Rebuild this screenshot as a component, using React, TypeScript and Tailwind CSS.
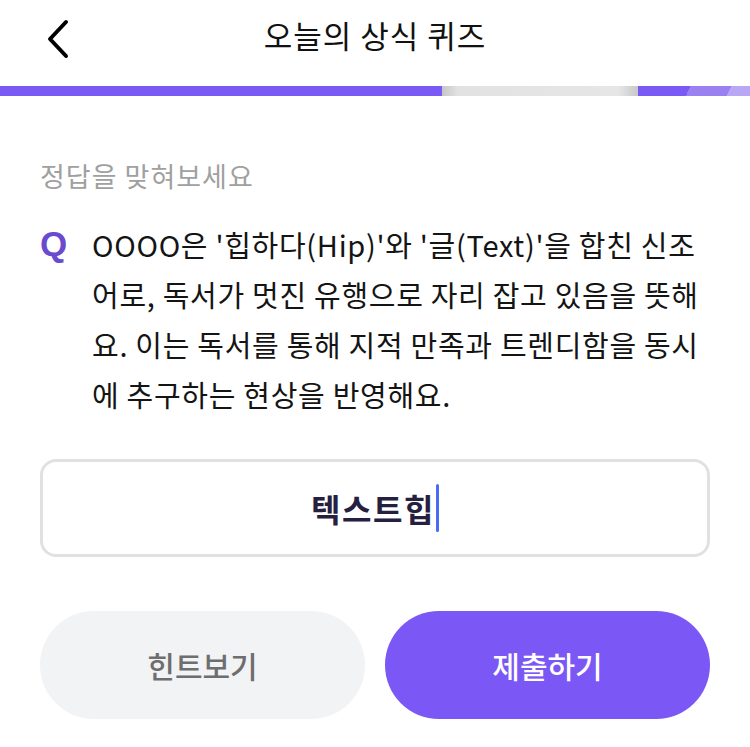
const font = { fontFamily: '"Noto Sans CJK KR", "Noto Sans", sans-serif' };

const lines = [
  "OOOO은 '힙하다(Hip)'와 '글(Text)'을 합친 신조",
  "어로, 독서가 멋진 유행으로 자리 잡고 있음을 뜻해",
  "요. 이는 독서를 통해 지적 만족과 트렌디함을 동시",
  "에 추구하는 현상을 반영해요.",
];

function Header() {
  return (
    <div className="relative flex items-center justify-center h-[86px]">
      <button className="absolute left-[40px] top-[14px] p-1">
        <svg width="32" height="44" viewBox="0 0 32 44" fill="none">
          <path d="M22 4 L6 21 L22 38" stroke="#000" strokeWidth="4" strokeLinecap="round" strokeLinejoin="round" />
        </svg>
      </button>
      <h1 className="text-[31px] text-[#111] -mt-[16px] tracking-[1px]">오늘의 상식 퀴즈</h1>
    </div>
  );
}

function ProgressBar() {
  return (
    <div className="flex h-[10px] w-full">
      <div className="w-[442px] bg-[#7b59f5]" />
      <div className="w-[196px] bg-[linear-gradient(90deg,#c6c6c6,#e2e2e2_8%,#e6e6e6_90%,#c8c8c8)]" />
      <div className="flex-1 bg-[linear-gradient(115deg,#7b59f5_45%,#9a80f0_45%,#9a80f0_80%,#b9a7f6_80%)]" />
    </div>
  );
}

export default function App() {
  return (
    <div className="w-[750px] h-[747px] bg-white overflow-hidden" style={font}>
      <Header />
      <ProgressBar />
      <div className="px-10">
        <p className="mt-[62px] text-[27px] leading-[36px] text-[#a0a0a0] tracking-[1px]">정답을 맞혀보세요</p>
        <div className="mt-[25px] flex">
          <span
            className="w-[52px] text-[35px] leading-[50px] font-bold text-[#6a4bd0]"
            style={{ fontFamily: '"Liberation Sans", Arial, sans-serif' }}
          >
            Q
          </span>
          <div className="text-[29px] leading-[50px] text-[#141414] tracking-[0.7px]">
            {lines.map((line) => (
              <span key={line} className="block whitespace-nowrap">{line}</span>
            ))}
          </div>
        </div>
        <div className="mt-[40px] h-[98px] border-[3px] border-[#e0e1e3] rounded-[16px] flex items-center justify-center">
          <span className="text-[32px] font-bold text-[#262040] tracking-[1.5px]">텍스트힙</span>
          <span className="ml-[1px] w-[3px] h-[48px] rounded-sm bg-[#4b6cf2]" />
        </div>
        <div className="mt-[54px] flex gap-5">
          <button className="flex-1 h-[108px] rounded-full bg-[#f2f3f5] text-[30px] font-medium text-[#6e6e6e]">힌트보기</button>
          <button className="flex-1 h-[108px] rounded-full bg-[#7b57f5] text-[30px] font-medium text-white">제출하기</button>
        </div>
      </div>
    </div>
  );
}
